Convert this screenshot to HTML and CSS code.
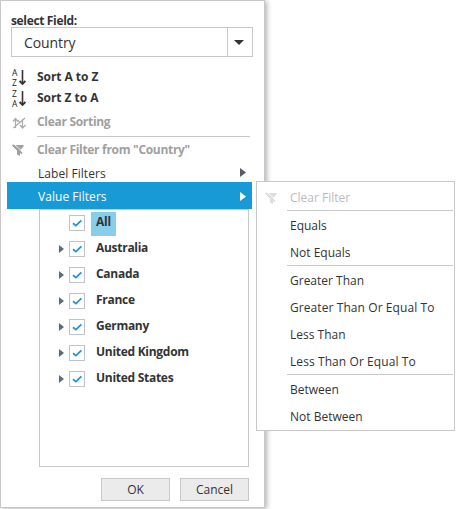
FILE: index.html
```html
<!DOCTYPE html>
<html lang="en">
<head>
<meta charset="utf-8">
<title>Pivot field filter</title>
<link rel="stylesheet" href="styles.css">
</head>
<body>
<svg class="defs" width="0" height="0">
  <symbol id="check" viewBox="0 0 14 14"><path d="M3 7.2 5.9 9.6 11.4 4.4" fill="none" stroke="#2193d6" stroke-width="1.8"/></symbol>
  <symbol id="funnel" viewBox="0 0 12 12"><path d="M1.5 1H11.5v1.5L8 6.5V12L5 10.5V6.5L1.5 3z" fill="currentColor"/><path d="M2.2 .3 10.8 8" stroke="#fff" stroke-width=".9"/><path d="M.5 .8 10 9.5" stroke="currentColor" stroke-width="1.8"/></symbol>
  <symbol id="down" viewBox="0 0 7 17"><path d="M3.5 1v14" fill="none" stroke="#3b3131" stroke-width="1.6"/><path d="M.6 12 3.5 15 6.4 12" fill="none" stroke="#333" stroke-width="1.9"/></symbol>
</svg>
<main class="panel">
  <div class="caption"><span class="b">select Field:</span></div>
  <div class="select"><span class="value">Country</span><span class="drop"><svg width="10" height="5"><path d="M0 0h10L5 5z" fill="#333"/></svg></span></div>
  <div class="row sort first"><span class="icon az"><span class="letters"><i>A</i><i>Z</i></span><svg width="7" height="17"><use href="#down"/></svg></span><span class="b">Sort A to Z</span></div>
  <div class="row sort"><span class="icon az"><span class="letters"><i>Z</i><i>A</i></span><svg width="7" height="17"><use href="#down"/></svg></span><span class="b">Sort Z to A</span></div>
  <div class="row clear"><span class="icon"><svg width="15" height="12" viewBox="0 0 15 12" fill="none" stroke="#aaa" stroke-width="1.2"><path d="M3.5 11V2M1 4.5 3.5 1.5 6 4.5M1.5 11 13 1M10.5 2v8.5M8 8 10.5 11 13.5 8M6 3l2 3"/></svg></span><span class="b">Clear Sorting</span></div>
  <div class="rule"></div>
  <div class="row clear filter"><span class="icon"><svg width="12" height="12"><use href="#funnel"/></svg></span><span class="b">Clear Filter from "Country"</span></div>
  <div class="sub"><span>Label Filters</span><svg width="6" height="9"><path d="M0 0 6 4.5 0 9z" fill="#5b5d66"/></svg></div>
  <div class="sub active"><span>Value Filters</span><svg width="6" height="9"><path d="M0 0 6 4.5 0 9z" fill="#fff"/></svg></div>
  <div class="tree">
    <div class="node"><span class="arrow none"></span><span class="box"><svg width="14" height="14"><use href="#check"/></svg></span><span class="label picked">All</span></div>
    <div class="node"><span class="arrow"></span><span class="box"><svg width="14" height="14"><use href="#check"/></svg></span><span class="label">Australia</span></div>
    <div class="node"><span class="arrow"></span><span class="box"><svg width="14" height="14"><use href="#check"/></svg></span><span class="label">Canada</span></div>
    <div class="node"><span class="arrow"></span><span class="box"><svg width="14" height="14"><use href="#check"/></svg></span><span class="label">France</span></div>
    <div class="node"><span class="arrow"></span><span class="box"><svg width="14" height="14"><use href="#check"/></svg></span><span class="label">Germany</span></div>
    <div class="node"><span class="arrow"></span><span class="box"><svg width="14" height="14"><use href="#check"/></svg></span><span class="label">United Kingdom</span></div>
    <div class="node"><span class="arrow"></span><span class="box"><svg width="14" height="14"><use href="#check"/></svg></span><span class="label">United States</span></div>
  </div>
  <div class="buttons"><button>OK</button><button>Cancel</button></div>
</main>
<nav class="menu">
  <div class="item off"><svg class="funnel" width="12" height="12"><use href="#funnel"/></svg><span>Clear Filter</span></div>
  <div class="line"></div>
  <div class="item">Equals</div>
  <div class="item">Not Equals</div>
  <div class="line"></div>
  <div class="item">Greater Than</div>
  <div class="item wide">Greater Than Or Equal To</div>
  <div class="item">Less Than</div>
  <div class="item wide">Less Than Or Equal To</div>
  <div class="line"></div>
  <div class="item">Between</div>
  <div class="item">Not Between</div>
</nav>
</body>
</html>
```

FILE: styles.css
```css
* { box-sizing: border-box; }
body { margin: 0; width: 456px; height: 509px; overflow: hidden; background: #fff; color: #333; font: 12px/16px "Open Sans", "Noto Sans", sans-serif; position: relative; }
svg { display: block; flex: none; }
.defs { position: absolute; }
.panel { width: 265px; height: 508px; border: 1px solid #c8c8c8; background: #fff; box-shadow: 2px 1px 5px rgba(0,0,0,.3); padding: 11px 11px 0 10px; }
.b { font-weight: 700; font-size: 12px; letter-spacing: -.3px; white-space: nowrap; }
.caption { height: 15px; line-height: 18px; }
.caption .b { letter-spacing: -.35px; }
.select { width: 242px; height: 30px; border: 1px solid #c8c8c8; display: flex; }
.value { flex: 1; padding-left: 12px; font-size: 14px; line-height: 30px; letter-spacing: -.1px; }
.drop { width: 25px; border-left: 1px solid #c8c8c8; display: flex; align-items: center; justify-content: center; padding-right: 2px; }
.row { height: 21px; display: flex; align-items: center; }
.first { margin-top: 10px; }
.sort .b { margin-top: -1px; letter-spacing: -.05px; }
.icon { width: 26px; padding-left: 1px; flex: none; display: flex; }
.az { gap: 1px; align-items: center; }
.letters { width: 6px; display: flex; flex-direction: column; }
.letters i { font: 8.5px/10px "Open Sans", sans-serif; color: #222; }
.clear { height: 27px; color: #a0a0a0; }
.clear .b { margin-top: -1px; }
.rule { height: 1px; margin: 0 0 0 26px; width: 213px; background: #c8c8c8; }
.filter { height: 26px; }
.filter .b { margin-top: 0; }
.sub { height: 19px; width: 245px; margin-left: -4px; padding: 0 6px 0 31px; display: flex; align-items: center; justify-content: space-between; }
.sub span { padding-top: 2px; letter-spacing: .05px; }
.active { height: 27px; background: #189ad6; color: #fff; }
.active svg { margin-top: 1px; }
.tree { width: 210px; height: 258px; margin-left: 28px; border: 1px solid #c8c8c8; padding: 0 0 0 19px; }
.node { height: 26px; display: flex; align-items: center; }
.arrow { width: 10px; height: 8px; }
.arrow::before { content: ""; display: block; width: 0; height: 0; border: 4px solid transparent; border-left: 5px solid #5e6b78; border-right: 0; }
.none { visibility: hidden; }
.box { width: 16px; height: 16px; margin-top: -1px; border: 1px solid #c0c4c8; background: #fff; }
.label { margin: 2px 0 0 6px; padding: 0 5px; height: 24px; line-height: 20px; font-weight: 700; font-size: 12px; letter-spacing: -.28px; }
.picked { background: #87ceeb; }
.buttons { display: flex; gap: 10px; margin: 11px 0 0 90px; }
button { width: 69px; height: 23px; border: 1px solid #c8c8c8; background: #ebebeb; padding: 0; font: 12px/20px "Open Sans", sans-serif; color: #333; }
.menu { position: absolute; left: 256px; top: 181px; width: 199px; height: 250px; border: 1px solid #c8c8c8; background: #fff; padding-top: 1px; }
.item { height: 27px; padding: 2px 0 0 33px; display: flex; align-items: center; }
.wide { letter-spacing: .08px; }
.off { color: #bbb; padding-left: 8px; }
.off span { margin-left: 13px; }
.funnel { color: #ddd; }
.line { height: 1px; margin: 0 1px 0 30px; background: #c8c8c8; }
```
